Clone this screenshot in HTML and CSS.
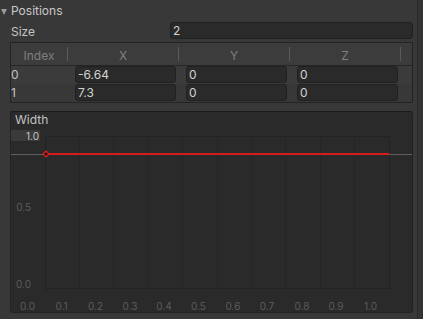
FILE: index.html
```html
<!DOCTYPE html>
<html lang="en">
<head>
    <meta charset="UTF-8">
    <title>Line Renderer - Positions</title>
    <link rel="stylesheet" href="styles.css">
</head>
<body>
<div class="inspector">
    <div class="content">
        <div class="foldout">
            <span class="arrow"></span>
            <span class="foldout-label">Positions</span>
        </div>

        <div class="field-row">
            <span class="field-label">Size</span>
            <div class="input">2</div>
        </div>

        <div class="list">
            <div class="list-header">
                <div class="col col-index"><span class="col-name">Index</span><span class="sep"></span></div>
                <div class="col"><span class="col-name">X</span><span class="sep"></span></div>
                <div class="col"><span class="col-name">Y</span><span class="sep"></span></div>
                <div class="col"><span class="col-name">Z</span><span class="sep"></span></div>
                <div class="col-rest"></div>
            </div>
            <div class="list-row">
                <div class="cell cell-index">0</div>
                <div class="cell"><div class="input">-6.64</div></div>
                <div class="cell"><div class="input">0</div></div>
                <div class="cell"><div class="input">0</div></div>
                <div class="cell-rest"></div>
            </div>
            <div class="list-row alt">
                <div class="cell cell-index">1</div>
                <div class="cell"><div class="input">7.3</div></div>
                <div class="cell"><div class="input">0</div></div>
                <div class="cell"><div class="input">0</div></div>
                <div class="cell-rest"></div>
            </div>
        </div>

        <div class="curve">
            <div class="curve-title">Width</div>
            <svg class="curve-graph" width="401" height="184" viewBox="0 0 401 184">
                <!-- plot area -->
                <rect x="34.5" y="8.5" width="344" height="152" fill="#2a2a2a" stroke="#232323"/>
                <g stroke="#262626" stroke-width="1">
                    <line x1="68.5" y1="9" x2="68.5" y2="160"/>
                    <line x1="102.5" y1="9" x2="102.5" y2="160"/>
                    <line x1="137.5" y1="9" x2="137.5" y2="160"/>
                    <line x1="171.5" y1="9" x2="171.5" y2="160"/>
                    <line x1="206.5" y1="9" x2="206.5" y2="160"/>
                    <line x1="240.5" y1="9" x2="240.5" y2="160"/>
                    <line x1="274.5" y1="9" x2="274.5" y2="160"/>
                    <line x1="309.5" y1="9" x2="309.5" y2="160"/>
                    <line x1="343.5" y1="9" x2="343.5" y2="160"/>
                </g>

                <!-- value axis -->
                <rect x="0" y="2" width="29" height="11" fill="#3a3a3a"/>
                <text class="axis axis-hot" x="28" y="12" text-anchor="end">1.0</text>
                <text class="axis" x="20" y="83" text-anchor="end">0.5</text>
                <text class="axis" x="20" y="160" text-anchor="end">0.0</text>

                <!-- curve -->
                <line x1="0" y1="26.5" x2="401" y2="26.5" stroke="#5f5f5f"/>
                <line x1="35" y1="26" x2="378" y2="26" stroke="#d41c1c" stroke-width="2"/>
                <path d="M35 23 L38 26 L35 29 L32 26 Z" fill="#3a1010" stroke="#e02020" stroke-width="1.2"/>

                <!-- time axis -->
                <g class="axis" text-anchor="middle">
                    <text x="16.5" y="182">0.0</text>
                    <text x="50.5" y="182">0.1</text>
                    <text x="84.5" y="182">0.2</text>
                    <text x="119" y="182">0.3</text>
                    <text x="153" y="182">0.4</text>
                    <text x="187.5" y="182">0.5</text>
                    <text x="222" y="182">0.6</text>
                    <text x="256" y="182">0.7</text>
                    <text x="291" y="182">0.8</text>
                    <text x="325" y="182">0.9</text>
                    <text x="359.5" y="182">1.0</text>
                </g>
            </svg>
        </div>
    </div>
    <div class="scrollbar"></div>
</div>
</body>
</html>
```

FILE: styles.css
```css
body {
    margin: 0;
    background: #383838;
    font-family: Inter, "Noto Sans", sans-serif;
    font-size: 12px;
    color: #c4c4c4;
    overflow: hidden;
}
.inspector {
    display: flex;
    width: 423px;
    height: 319px;
}
.content {
    width: 417px;
}
.scrollbar {
    width: 5px;
    border-left: 1px solid #2b2b2b;
    background: #333333;
}

/* foldout */
.foldout {
    display: flex;
    align-items: center;
    height: 22px;
    line-height: 22px;
}
.arrow {
    width: 0;
    height: 0;
    margin: 1px 4px 0 1px;
    border-left: 3px solid transparent;
    border-right: 3px solid transparent;
    border-top: 6px solid #999999;
}
.foldout-label {
    color: #c8c8c8;
}

/* size field */
.field-row {
    display: flex;
    height: 18px;
    padding-left: 11px;
}
.field-label {
    width: 159px;
    line-height: 19px;
}
.input {
    box-sizing: border-box;
    height: 17px;
    line-height: 15px;
    padding-left: 2px;
    background: #2a2a2a;
    border: 1px solid #212121;
    border-radius: 3px;
    color: #d2d2d2;
    white-space: nowrap;
}
.field-row .input {
    flex: 1;
    margin-right: 4px;
}

/* list */
.list {
    margin: 2px 0 0 10px;
    width: 403px;
    box-sizing: border-box;
    border: 1px solid #232323;
}
.list-header {
    display: flex;
    height: 22px;
    background: #3c3c3c;
    border-bottom: 1px solid #262626;
}
.col {
    display: flex;
    align-items: center;
    width: 111px;
}
.col-index {
    width: 57px;
}
.col-name {
    flex: 1;
    text-align: center;
    color: #7f7f7f;
    font-size: 12px;
    padding-top: 2px;
}
.sep {
    width: 1px;
    height: 14px;
    background: #5a5a5a;
}
.col-rest,
.cell-rest {
    flex: 1;
}
.list-row {
    display: flex;
    height: 18px;
    background: #3b3b3b;
}
.list-row.alt {
    background: #383838;
}
.cell {
    display: flex;
    width: 111px;
}
.cell .input {
    flex: 1;
    margin: 0 3px 0 7px;
}
.cell-index {
    width: 57px;
    line-height: 17px;
}

/* curve */
.curve {
    margin: 8px 0 0 10px;
    width: 403px;
    height: 202px;
    box-sizing: border-box;
    background: #2a2a2a;
    border: 1px solid #232323;
    border-top-color: #1a1a1a;
    border-radius: 3px;
}
.curve-title {
    height: 16px;
    line-height: 16px;
    padding-left: 4px;
    color: #c4c4c4;
}
.curve-graph {
    display: block;
}
.axis {
    font-family: Inter, "Noto Sans", sans-serif;
    font-size: 10px;
    fill: #5c5c5c;
}
.axis-hot {
    fill: #c4c4c4;
}
```
